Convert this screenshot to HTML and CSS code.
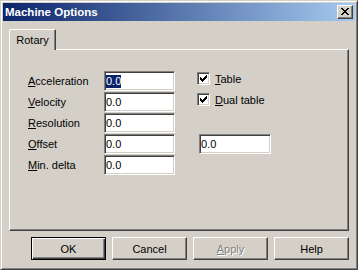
FILE: index.html
```html
<!DOCTYPE html>
<html lang="en">
<head>
  <meta charset="UTF-8" />
  <title>Machine Options</title>
  <link rel="stylesheet" href="styles.css">
</head>
<body>
  <div class="window">
    <div class="titlebar">
      <span class="title">Machine Options</span>
      <button class="close">
        <svg width="8" height="7" viewBox="0 0 8 7" shape-rendering="crispEdges">
          <path d="M0 0h2v1h-2zM6 0h2v1h-2zM1 1h2v1h-2zM5 1h2v1h-2zM2 2h4v1h-4zM3 3h2v1h-2zM2 4h4v1h-4zM1 5h2v1h-2zM5 5h2v1h-2zM0 6h2v1h-2zM6 6h2v1h-2z" fill="#000"/>
        </svg>
      </button>
    </div>

    <div class="dialog">
      <div class="tabs">
        <div class="tab active">Rotary</div>
      </div>

      <div class="panel">
        <div class="grid">
          <label class="lbl"><u>A</u>cceleration</label>
          <div class="edit"><span class="sel">0.0</span></div>
          <label class="check right"><span class="box"><svg width="7" height="7" viewBox="0 0 7 7" shape-rendering="crispEdges"><path d="M6 0h1v1h-1zM5 1h2v1h-2zM0 2h1v1h-1zM4 2h3v1h-3zM0 3h2v1h-2zM3 3h3v1h-3zM0 4h5v1h-5zM1 5h3v1h-3zM2 6h1v1h-1z" fill="#000"/></svg></span><span><u>T</u>able</span></label>

          <label class="lbl"><u>V</u>elocity</label>
          <div class="edit">0.0</div>
          <label class="check right"><span class="box"><svg width="7" height="7" viewBox="0 0 7 7" shape-rendering="crispEdges"><path d="M6 0h1v1h-1zM5 1h2v1h-2zM0 2h1v1h-1zM4 2h3v1h-3zM0 3h2v1h-2zM3 3h3v1h-3zM0 4h5v1h-5zM1 5h3v1h-3zM2 6h1v1h-1z" fill="#000"/></svg></span><span><u>D</u>ual table</span></label>

          <label class="lbl"><u>R</u>esolution</label>
          <div class="edit">0.0</div>

          <label class="lbl"><u>O</u>ffset</label>
          <div class="edit">0.0</div>
          <div class="edit right wide">0.0</div>

          <label class="lbl"><u>M</u>in. delta</label>
          <div class="edit">0.0</div>
        </div>
      </div>

      <div class="buttons">
        <button class="btn default">OK</button>
        <button class="btn">Cancel</button>
        <button class="btn disabled"><u>A</u>pply</button>
        <button class="btn">Help</button>
      </div>
    </div>
  </div>
</body>
</html>
```

FILE: styles.css
```css
body { margin: 0; background: #D4D0C8; font-family: "Liberation Sans", Arial, sans-serif; font-size: 11px; color: #000; }

.window {
  width: 358px; height: 270px; box-sizing: border-box;
  border: 1px solid; border-color: #D4D0C8 #404040 #404040 #D4D0C8;
  box-shadow: inset 1px 1px #fff, inset -1px -1px #808080;
  padding: 2px; background: #D4D0C8;
  display: flex; flex-direction: column;
}

.titlebar {
  height: 18px; display: flex; align-items: center; justify-content: space-between;
  background: linear-gradient(to right, #0A246A, #A6CAF0);
  padding: 0 2px 0 2px;
}
.title { color: #fff; font-weight: bold; font-size: 11.5px; }
.close {
  width: 16px; height: 14px; padding: 0; margin: 0;
  background: #D4D0C8; box-sizing: border-box;
  border: 1px solid; border-color: #fff #404040 #404040 #fff;
  box-shadow: inset -1px -1px #808080;
  display: flex; align-items: center; justify-content: center;
}
.close svg { display: block; margin: 0 1px 1px 0; }

.dialog { flex: 1; padding: 8px 6px 0 6px; display: flex; flex-direction: column; }

.tabs { height: 20px; display: flex; align-items: flex-end; }
.tab {
  position: relative; z-index: 1;
  height: 21px; margin-bottom: -1px; width: 47px; box-sizing: border-box;
  background: #D4D0C8;
  border-left: 1px solid #fff; border-top: 1px solid #fff; border-right: 1px solid #404040;
  border-top-left-radius: 2px; border-top-right-radius: 1px;
  box-shadow: inset -1px 0 #808080;
  display: flex; justify-content: center; padding-top: 4px;
}

.panel {
  height: 182px; box-sizing: border-box;
  border: 1px solid; border-color: #fff #404040 #404040 #fff;
  box-shadow: inset -1px -1px #808080;
  padding: 21px 0 0 18px;
}

.grid {
  display: grid;
  grid-template-columns: 76px 71px 22px 80px;
  grid-auto-rows: 20px; row-gap: 1px;
  align-items: center;
}
.lbl { grid-column: 1; }
.right { grid-column: 4; }

.edit {
  height: 20px; box-sizing: border-box; background: #fff;
  border: 1px solid; border-color: #808080 #fff #fff #808080;
  box-shadow: inset 1px 1px #404040, inset -1px -1px #D4D0C8;
  padding: 0 1px; display: flex; align-items: center;
}
.edit.wide { margin-left: 2px; width: 72px; }
.sel { background: #0A246A; color: #fff; line-height: 13px; }

.check { display: flex; align-items: center; gap: 5px; align-self: start; margin-top: 1px; }
.box {
  width: 13px; height: 13px; box-sizing: border-box; background: #fff;
  border: 1px solid; border-color: #808080 #fff #fff #808080;
  box-shadow: inset 1px 1px #404040, inset -1px -1px #D4D0C8;
  display: flex; align-items: center; justify-content: center;
}
.box svg { display: block; }

.buttons { display: flex; justify-content: flex-end; gap: 6px; margin-top: 6px; }
.btn {
  width: 75px; height: 23px; box-sizing: border-box; padding: 0;
  background: #D4D0C8; font-family: inherit; font-size: 11px; color: #000;
  border: 1px solid; border-color: #fff #404040 #404040 #fff;
  box-shadow: inset -1px -1px #808080;
}
.btn.default {
  border-color: #000;
  box-shadow: inset 1px 1px #fff, inset -1px -1px #404040, inset -2px -2px #808080;
}
.btn.disabled { color: #808080; text-shadow: 1px 1px #fff; }
```
